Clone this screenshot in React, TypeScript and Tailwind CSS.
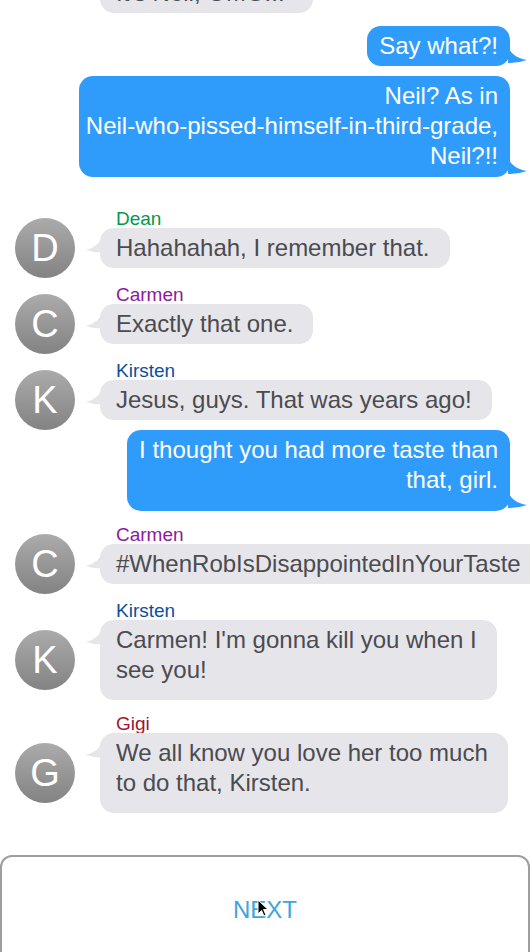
import React from "react";

type Incoming = {
  name: string;
  color: string;
  lines: string[];
  gap: string;
  tall?: boolean;
};

const font = "font-['Liberation_Sans',Arial,Helvetica,sans-serif]";

function Avatar({ letter }: { letter: string }) {
  return (
    <div className="-my-[10px] flex h-[60px] w-[60px] shrink-0 items-center justify-center rounded-full bg-linear-to-b from-[#ababab] to-[#838383] text-[38px] leading-none text-white">
      {letter}
    </div>
  );
}

function GrayTail() {
  return (
    <svg
      className="absolute left-[-14px] top-[9px]"
      width="16"
      height="16"
      viewBox="0 0 16 16"
    >
      <path d="M16 0 Q12 10 0 13 Q8 15.5 16 15.5 Z" fill="#e5e5ea" />
    </svg>
  );
}

function BlueTail() {
  return (
    <svg
      className="absolute bottom-[2px] right-[-18px]"
      width="20"
      height="18"
      viewBox="0 0 20 18"
    >
      <path d="M0 0 Q3 11 19 14 Q9 17.5 0 17 Z" fill="#2f9cfc" />
    </svg>
  );
}

function IncomingMessage({ msg }: { msg: Incoming }) {
  return (
    <div className={`flex pl-[15px] ${msg.gap}`}>
      <div className="flex w-[60px] shrink-0 flex-col">
        <div className="h-[19px]" />
        <div className="flex flex-1 items-center">
          <Avatar letter={msg.name[0]} />
        </div>
      </div>
      <div className="ml-[25px] flex flex-col items-start">
        <div className="pl-4 text-[19px] leading-[19px]" style={{ color: msg.color }}>
          {msg.name}
        </div>
        <div
          className={`relative whitespace-nowrap rounded-[14px] bg-[#e5e5ea] pl-4 pr-5 pt-[5px] text-[24px] leading-[30px] text-[#4b4b50] ${
            msg.tall ? "pb-[15px]" : "pb-[5px]"
          }`}
        >
          <GrayTail />
          {msg.lines.map((l, i) => (
            <div key={i}>{l}</div>
          ))}
        </div>
      </div>
    </div>
  );
}

function Outgoing({
  lines,
  gap,
  extra,
}: {
  lines: string[];
  gap: string;
  extra?: string;
}) {
  return (
    <div className={`flex justify-end pr-[20px] ${gap}`}>
      <div
        className={`relative whitespace-nowrap rounded-[14px] bg-[#2f9cfc] pr-3 pt-[5px] text-right text-[24px] leading-[30px] text-white ${
          extra ?? "pb-[5px] pl-3"
        }`}
      >
        {lines.map((l, i) => (
          <div key={i}>{l}</div>
        ))}
        <BlueTail />
      </div>
    </div>
  );
}

export default function App() {
  return (
    <div className={`relative h-[952px] w-full overflow-hidden bg-white ${font}`}>
      <div className="flex flex-col">
        <div className="ml-[100px] mt-[-27px] w-fit rounded-[14px] bg-[#e5e5ea] py-[5px] pl-4 pr-7 text-[24px] leading-[30px] text-[#4b4b50]">
          It's Neil, OMG!!!
        </div>

        <Outgoing gap="mt-[13px]" lines={["Say what?!"]} />
        <Outgoing
          gap="mt-[10px]"
          extra="pb-[6px] pl-[7px]"
          lines={["Neil? As in", "Neil-who-pissed-himself-in-third-grade,", "Neil?!!"]}
        />

        <IncomingMessage
          msg={{ name: "Dean", color: "#009a49", lines: ["Hahahahah, I remember that."], gap: "mt-[32px]" }}
        />
        <IncomingMessage
          msg={{ name: "Carmen", color: "#8b1a9f", lines: ["Exactly that one."], gap: "mt-[17px]" }}
        />
        <IncomingMessage
          msg={{ name: "Kirsten", color: "#0c4f99", lines: ["Jesus, guys. That was years ago!"], gap: "mt-[17px]" }}
        />

        <Outgoing
          gap="mt-[10px]"
          extra="pb-[16px] pl-3"
          lines={["I thought you had more taste than", "that, girl."]}
        />

        <IncomingMessage
          msg={{ name: "Carmen", color: "#8b1a9f", lines: ["#WhenRobIsDisappointedInYourTaste"], gap: "mt-[14px]" }}
        />
        <IncomingMessage
          msg={{
            name: "Kirsten",
            color: "#0c4f99",
            lines: ["Carmen! I'm gonna kill you when I", "see you!"],
            gap: "mt-[17px]",
            tall: true,
          }}
        />
        <IncomingMessage
          msg={{
            name: "Gigi",
            color: "#a31331",
            lines: ["We all know you love her too much", "to do that, Kirsten."],
            gap: "mt-[14px]",
            tall: true,
          }}
        />

        <div className="relative mt-[42px] flex h-[140px] w-full justify-center rounded-[12px] border-2 border-[#9e9e9e] pt-[41px]">
          <span className="text-[24px] leading-[24px] text-[#3ea6dd]">NEXT</span>
          <svg
            className="absolute left-[255px] top-[42px]"
            width="12"
            height="18"
            viewBox="0 0 12 18"
          >
            <path d="M1 1 L1 15 L4.5 11.5 L7 17 L9 16 L6.5 10.5 L11 10.5 Z" fill="#000" stroke="#fff" strokeWidth="1" />
          </svg>
        </div>
      </div>
    </div>
  );
}
